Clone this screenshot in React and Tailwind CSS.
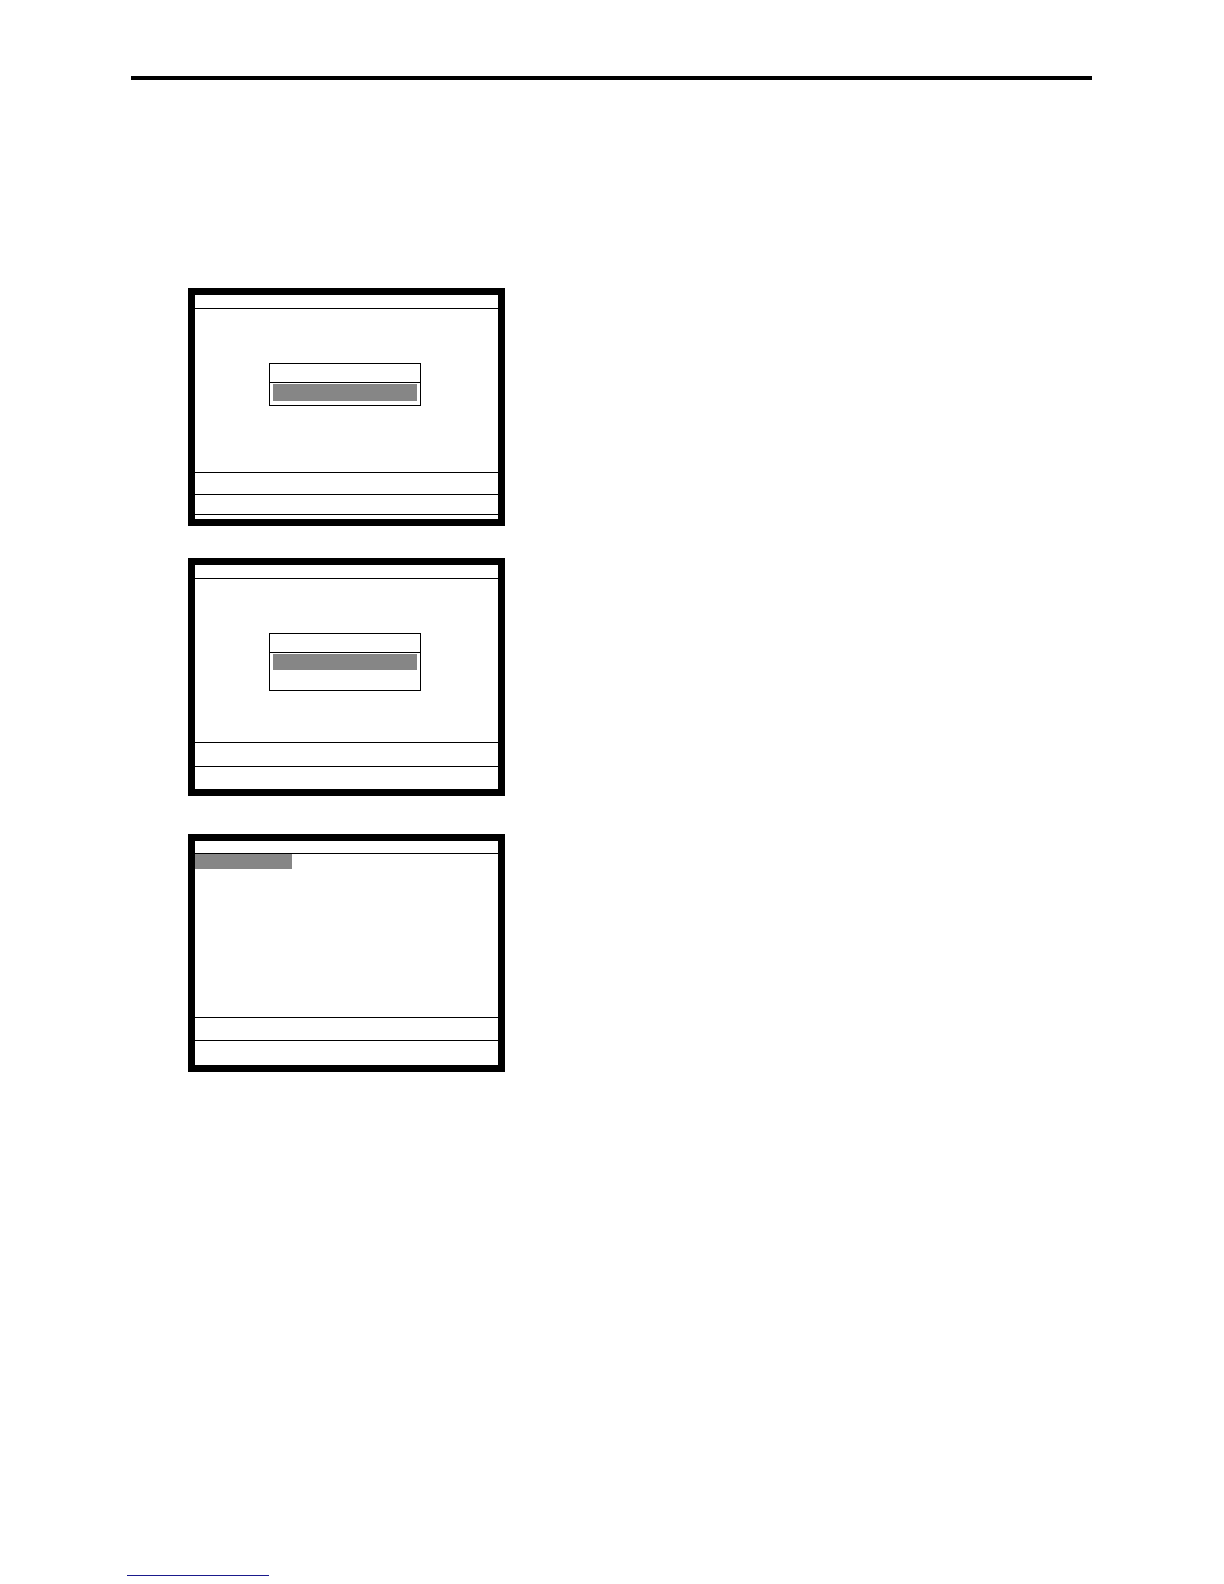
export default function App() {
  const Screen = ({ rows, children, headerH = 13 }) => (
    <div className="w-[317px] border-[7px] border-black bg-white">
      <div className="flex h-[224px] flex-col">
        <div className="border-b border-black" style={{ height: headerH + 1 }} />
        <div className="h-[164px] border-b border-black">{children}</div>
        {rows}
      </div>
    </div>
  );

  return (
    <div className="relative h-[1584px] w-[1224px] bg-white" style={{ fontFamily: '"Liberation Sans", Arial, sans-serif' }}>
      <div className="pt-[76px] pl-[131px]">
        <div className="h-[4px] w-[961px] bg-black" />
      </div>

      <div className="ml-[188px] mt-[208px] flex flex-col">
        {/* Screen 1 */}
        <Screen
          rows={
            <>
              <div className="h-[22px] border-b border-black" />
              <div className="h-[20px] border-b border-black" />
              <div className="flex-1" />
            </>
          }
        >
          <div className="ml-[74px] mt-[54px] w-[152px] border border-black">
            <div className="h-[19px] border-b border-black" />
            <div className="px-[3px] pb-[4px] pt-[1px]">
              <div className="h-[17px] bg-[#868686]" />
            </div>
          </div>
        </Screen>

        {/* Screen 2 */}
        <div className="mt-[32px]">
          <Screen
            rows={
              <>
                <div className="h-[24px] border-b border-black" />
                <div className="flex-1" />
              </>
            }
          >
            <div className="ml-[74px] mt-[54px] w-[152px] border border-black">
              <div className="h-[19px] border-b border-black" />
              <div className="px-[3px] pt-[1px]">
                <div className="h-[16px] bg-[#868686]" />
              </div>
              <div className="h-[20px]" />
            </div>
          </Screen>
        </div>

        {/* Screen 3 */}
        <div className="mt-[38px]">
          <Screen
            headerH={12}
            rows={
              <>
                <div className="h-[23px] border-b border-black" />
                <div className="flex-1" />
              </>
            }
          >
            <div className="h-[15px] w-[97px] bg-[#868686]" />
          </Screen>
        </div>
      </div>

      <div className="absolute left-[127px] top-[1575px] h-px w-[142px] bg-[#1a1a8c]" />
    </div>
  );
}
